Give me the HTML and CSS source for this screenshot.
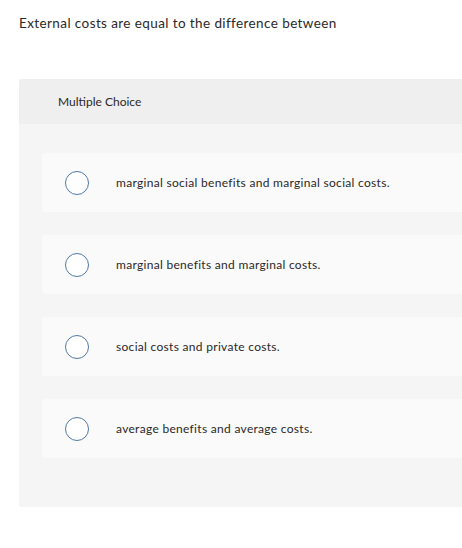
FILE: index.html
```html
<!DOCTYPE html>
<html>
<head>
<meta charset="utf-8">
<link rel="stylesheet" href="styles.css">
</head>
<body>
<p class="question">External costs are equal to the difference between</p>
<div class="panel">
  <div class="panel-head">Multiple Choice</div>
  <div class="panel-body">
    <div class="option"><span class="radio"></span><span class="label">marginal social benefits and marginal social costs.</span></div>
    <div class="option"><span class="radio"></span><span class="label">marginal benefits and marginal costs.</span></div>
    <div class="option"><span class="radio"></span><span class="label">social costs and private costs.</span></div>
    <div class="option"><span class="radio"></span><span class="label">average benefits and average costs.</span></div>
  </div>
</div>
</body>
</html>
```
FILE: styles.css
```css
html, body {
  margin: 0;
  padding: 0;
  background: #ffffff;
  overflow: hidden;
}
body {
  font-family: "Lato", "Open Sans", sans-serif;
  color: #2b2828;
  width: 462px;
}
.question {
  margin: 0;
  padding: 14px 0 0 19px;
  font-size: 13.5px;
  line-height: 18px;
  height: 65px;
  letter-spacing: 0.4px;
}
.panel {
  margin-left: 19px;
  width: 460px;
  background: #f5f5f5;
  border-radius: 3px 0 0 3px;
}
.panel-head {
  background: #efefef;
  height: 45px;
  display: flex;
  align-items: center;
  padding-left: 39px;
  font-size: 12px;
  border-radius: 3px 0 0 0;
}
.panel-body {
  padding: 29px 0 49px 23px;
  display: flex;
  flex-direction: column;
  gap: 23px;
}
.option {
  height: 59px;
  background: #fafafa;
  border-radius: 3px 0 0 3px;
  display: flex;
  align-items: center;
  padding-left: 23px;
}
.radio {
  width: 22px;
  height: 22px;
  border: 1.5px solid #4f79a6;
  border-radius: 50%;
  background: #ffffff;
  flex: none;
}
.label {
  margin-left: 27px;
  font-size: 12px;
  letter-spacing: 0.3px;
  color: #2b2828;
}
```
